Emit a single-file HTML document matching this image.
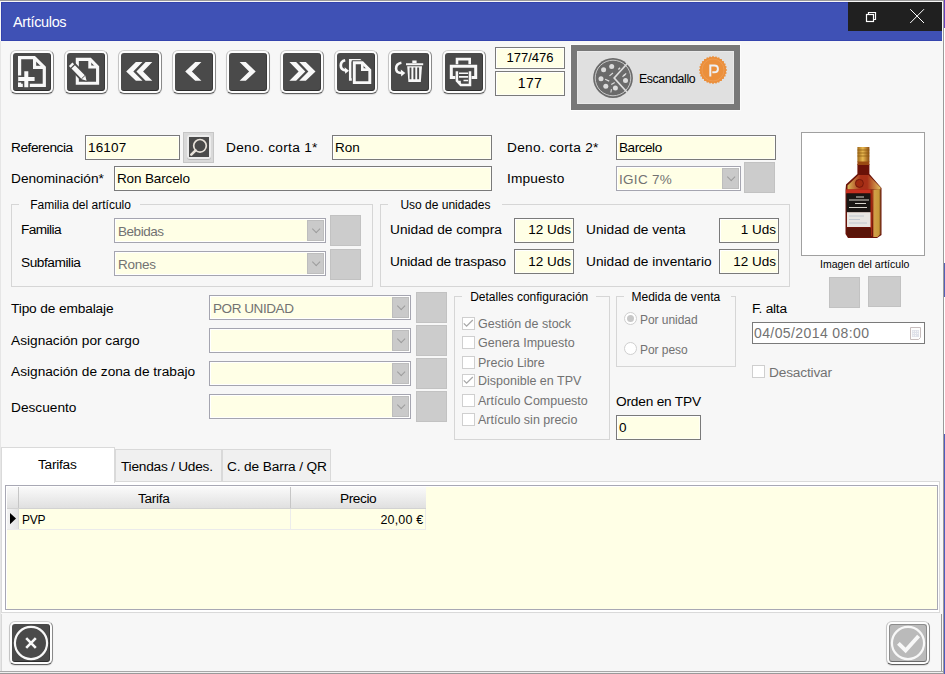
<!DOCTYPE html>
<html><head><meta charset="utf-8">
<style>
*{box-sizing:border-box;margin:0;padding:0}
html,body{width:945px;height:674px;overflow:hidden;background:#f7f7f7;font-family:"Liberation Sans",sans-serif}
.a{position:absolute}
.t{position:absolute;white-space:nowrap;line-height:13px;font-size:13.7px;color:#000;letter-spacing:0}
.g{color:#727272}
.inp{position:absolute;background:#ffffe6;border:1px solid #7a7a7a;box-shadow:inset 1px 1px 0 #fff,inset -1px -1px 0 #fffff4}
.cmb{position:absolute;background:#ffffe6;border:1px solid #a5a5b0;box-shadow:inset 0 0 0 1px #fff}
.dd{position:absolute;background:#cacaca;border:1px solid #bdbdbd}
.dd:after{content:"";position:absolute;left:4.6px;top:5px;width:5.4px;height:5.4px;border-right:1px solid #9c9c9c;border-bottom:1px solid #9c9c9c;transform:rotate(45deg)}
.sq{position:absolute;background:#cccccc;border:1px solid #c2c2c2}
.grp{position:absolute;border:1px solid #d6d6d6}
.gt{position:absolute;white-space:nowrap;font-size:12px;line-height:12px;background:#f7f7f7;padding:0 4px;color:#000}
.cb{position:absolute;width:13px;height:13px;border:1px solid #cfcfcf;background:#fff}
.btn{position:absolute;width:44px;height:44px;border-radius:6px;background:#fdfdfd;border:1px solid;border-color:#d0d0d0 #8a8a8a #606060 #c4c4c4;box-shadow:0 1px 1px rgba(0,0,0,.12)}
.btn .in{position:absolute;left:2px;top:2px;width:38px;height:38px;background:#4a4a4a;border-radius:3px;border-bottom:1px solid #2c2c2c;border-right:1px solid #3a3a3a}
.btn svg{position:absolute;left:-1px;top:-1px}
</style></head><body>
<!-- window frame -->
<div class="a" style="left:0;top:0;width:945px;height:1px;background:#9a9a9a"></div>
<div class="a" style="left:1px;top:2px;width:941px;height:39px;background:#3f51b5;border-top:1px solid #3343ad;border-left:1px solid #3343ad;border-bottom:1px solid #3545ae"></div>
<div class="t" style="left:13px;top:15.2px;font-size:14.5px;line-height:14.5px;color:#fff;letter-spacing:-.35px">Artículos</div>
<div class="a" style="left:848px;top:2px;width:94px;height:29px;background:#202020"></div>
<!-- restore icon -->
<svg class="a" style="left:863px;top:9px" width="16" height="16" viewBox="0 0 16 16"><rect x="3.5" y="5.5" width="7" height="7" fill="none" stroke="#fff" stroke-width="1.2"/><path d="M5.5 5.5V3.5H12.5V10.5H10.5" fill="none" stroke="#fff" stroke-width="1.2"/></svg>
<svg class="a" style="left:909px;top:8px" width="16" height="16" viewBox="0 0 16 16"><path d="M1.2 1.2L15 15M15 1.2L1.2 15" stroke="#fff" stroke-width="1"/></svg>
<div class="a" style="left:943px;top:0;width:1px;height:674px;background:#9a9a9a"></div>
<div class="a" style="left:944px;top:0;width:1px;height:28px;background:#6a3fc0"></div>
<div class="a" style="left:944px;top:28px;width:1px;height:646px;background:#fff"></div>
<div class="a" style="left:944px;top:263px;width:1px;height:34px;background:#5560b8"></div>
<div class="a" style="left:944px;top:434px;width:1px;height:240px;background:#4f5cbf"></div>
<div class="a" style="left:0;top:41px;width:1px;height:633px;background:#e6e6e6"></div>
<div class="a" style="left:0;top:671px;width:943px;height:1px;background:#a8a8a8"></div>
<div class="a" style="left:941px;top:614px;width:1px;height:57px;background:#999"></div>
<div class="a" style="left:1px;top:614px;width:1px;height:57px;background:#d8d8d8"></div>
<div class="a" style="left:0;top:673px;width:943px;height:1px;background:#999"></div>
<div class="a" style="left:0;top:672px;width:943px;height:1px;background:#f0f0f0"></div>

<!-- TOOLBAR placeholder -->
<!-- TB START -->
<div class="btn" style="left:10px;top:50px"><div class="in" style="background:#4a4a4a"></div><svg width="44" height="44" viewBox="0 0 44 44"><path d="M9.6 7.6H24.3L34.3 17.4V35.4H9.6Z" fill="none" stroke="#f8f8f8" stroke-width="3.2"/>
<path d="M24.6 7.6V17.3H34.3" fill="none" stroke="#f8f8f8" stroke-width="3.2"/>
<path d="M16.3 21.3V37.2M8.2 29H24.6" stroke="#4a4a4a" stroke-width="7"/>
<path d="M16.3 21.3V37.2M8.2 29H24.6" stroke="#f8f8f8" stroke-width="4"/></svg></div>
<div class="btn" style="left:64px;top:50px"><div class="in" style="background:#4a4a4a"></div><svg width="44" height="44" viewBox="0 0 44 44"><path d="M13.3 9.4H26.2L33.6 16.8V33.3H13.3Z" fill="none" stroke="#f8f8f8" stroke-width="3.1"/>
<path d="M25.8 9.4V17H33.6" fill="none" stroke="#f8f8f8" stroke-width="3"/>
<g transform="translate(14.5 22.3) rotate(45.9)"><path d="M-12 -4.2H7.8L12.8 0L7.8 4.2H-12Z" fill="#4a4a4a"/>
<path d="M-11.2 -2.4H-8.8V2.4H-11.2Z M-7.6 -2.4H7.3L11.6 0L7.3 2.4H-7.6Z" fill="#f8f8f8"/><path d="M6.8 -2.6V2.6" stroke="#4a4a4a" stroke-width="0.9"/></g></svg></div>
<div class="btn" style="left:118px;top:50px"><div class="in" style="background:#4a4a4a"></div><svg width="44" height="44" viewBox="0 0 44 44"><path d="M27.6 12.1H34.3L25.1 21.4L34.3 30.7H27.6L18.4 21.4Z" fill="#f8f8f8"/><path d="M17.9 12.1H24.5L15.3 21.4L24.5 30.7H17.9L8.2 21.4Z" fill="#f8f8f8"/></svg></div>
<div class="btn" style="left:172px;top:50px"><div class="in" style="background:#4a4a4a"></div><svg width="44" height="44" viewBox="0 0 44 44"><path d="M23.2 12.1H29.4L19.9 21.4L29.4 30.7H23.2L13.2 21.4Z" fill="#f8f8f8"/></svg></div>
<div class="btn" style="left:226px;top:50px"><div class="in" style="background:#4a4a4a"></div><svg width="44" height="44" viewBox="0 0 44 44"><path d="M13.6 12.1H19.8L29.7 21.4L19.8 30.7H13.6L23.1 21.4Z" fill="#f8f8f8"/></svg></div>
<div class="btn" style="left:280px;top:50px"><div class="in" style="background:#4a4a4a"></div><svg width="44" height="44" viewBox="0 0 44 44"><path d="M9.4 12.1H16.1L25.3 21.4L16.1 30.7H9.4L18.6 21.4Z" fill="#f8f8f8"/><path d="M19.2 12.1H25.8L35.5 21.4L25.8 30.7H19.2L28.4 21.4Z" fill="#f8f8f8"/></svg></div>
<div class="btn" style="left:334px;top:50px"><div class="in" style="background:#4a4a4a"></div><svg width="44" height="44" viewBox="0 0 44 44"><path d="M16.2 10.3H25.8L29 13.5V29.5H16.2Z" fill="none" stroke="#f8f8f8" stroke-width="2.5"/>
<path d="M20.3 12.8H28.4L35.8 20.2V32.6H20.3Z" fill="#4a4a4a" stroke="#4a4a4a" stroke-width="5"/>
<path d="M20.3 12.8H28.4L35.8 20.2V32.6H20.3Z" fill="none" stroke="#f8f8f8" stroke-width="2.9"/>
<path d="M28.3 12.8V19.6H35.8" fill="none" stroke="#f8f8f8" stroke-width="2.6"/>
<path d="M11.2 10.3C8.3 10.9 6.8 13.1 6.8 15.5C6.8 18.2 8.8 20.1 11.6 20.5" fill="none" stroke="#f8f8f8" stroke-width="2.7"/>
<path d="M10.6 17.2L15 20.7L11.2 23.8Z" fill="#f8f8f8"/></svg></div>
<div class="btn" style="left:388px;top:50px"><div class="in" style="background:#4a4a4a"></div><svg width="44" height="44" viewBox="0 0 44 44"><path d="M13.4 12.7C10.2 13.3 8.1 15.6 8.1 18.4C8.1 21 10 22.8 13.2 23.1" fill="none" stroke="#f8f8f8" stroke-width="2.5"/>
<path d="M12.8 19.6L17.3 23L13.2 26.4Z" fill="#f8f8f8"/>
<path d="M18 13.2H35.2V15.3H18Z M24.3 10.6H28.6V13H24.3Z" fill="#f8f8f8"/>
<path d="M19.2 16.3H34L32.8 32H20.4Z" fill="#f8f8f8"/>
<path d="M21.6 17.6H23.4V29.2H21.6Z M25.4 17.6H27.3V29.2H25.4Z M29.2 17.6H31.1V29.2H29.2Z" fill="#4a4a4a"/></svg></div>
<div class="btn" style="left:442px;top:50px"><div class="in" style="background:#4a4a4a"></div><svg width="44" height="44" viewBox="0 0 44 44"><path d="M15 14.2V9.1H27.7V14.2" fill="none" stroke="#f8f8f8" stroke-width="2.6"/>
<path d="M9.3 16.2H33.7V27.6H9.3Z" fill="none" stroke="#f8f8f8" stroke-width="3"/>
<path d="M14.8 21.2H28V35.2H18.6L14.8 31Z" fill="#4a4a4a" stroke="#4a4a4a" stroke-width="3"/>
<path d="M14.9 21.3V30.8L18.8 34.9H28V21.3" fill="none" stroke="#f8f8f8" stroke-width="2.5"/>
<path d="M14.9 30.8H18.8V34.9Z" fill="#f8f8f8"/>
<path d="M17 22.5H26.1V23.9H17Z M17 26.1H26.1V27.7H17Z M21.5 29.7H26.1V31.3H21.5Z" fill="#f8f8f8"/></svg></div>
<!-- TB END -->

<!-- counters -->
<div class="inp" style="left:495px;top:47px;width:70px;height:22px;text-align:center"><div class="t" style="position:static;line-height:19px;font-size:13px;letter-spacing:0">177/476</div></div>
<div class="inp" style="left:495px;top:71px;width:70px;height:25px;text-align:center"><div class="t" style="position:static;line-height:22px;font-size:14px;letter-spacing:.3px">177</div></div>
<!-- escandallo -->
<div class="a" style="left:571px;top:45px;width:169px;height:65px;background:#e0e0e0;border:6px solid #787878;box-shadow:inset 0 0 0 1px #e9e9e9,0 0 0 1px #fcfcfc"></div>
<svg class="a" style="left:590px;top:55px" width="46" height="46" viewBox="0 0 46 46">
<circle cx="23" cy="23" r="19.9" fill="#6a6a6a"/>
<circle cx="23" cy="23" r="17.8" fill="none" stroke="#d2d2d2" stroke-width="0.9"/>
<path d="M37.5 8.3L24.2 23L37.5 37.7" fill="none" stroke="#dedede" stroke-width="1.7"/>
<g fill="#dcdcdc"><circle cx="21.7" cy="11.5" r="2.5"/><circle cx="13.6" cy="14.8" r="2.5"/><circle cx="11" cy="23.8" r="2.5"/><circle cx="15.8" cy="31.2" r="2.5"/><circle cx="25.4" cy="33" r="2.5"/><circle cx="35.5" cy="25.6" r="2.5"/>
<rect x="19" y="19" width="4.5" height="1.2" transform="rotate(-40 21 19.6)"/><rect x="15" y="24.5" width="4.5" height="1.2" transform="rotate(25 17 25)"/><rect x="21" y="28" width="4" height="1.2" transform="rotate(-30 23 28.6)"/><rect x="20.6" y="34" width="1.1" height="3.5" transform="rotate(10 21 35.7)"/><rect x="32" y="20" width="3.2" height="1.2" transform="rotate(-50 33.6 20.6)"/><rect x="33.5" y="19" width="3.2" height="1.2" transform="rotate(-50 35 19.6)"/><rect x="28" y="13" width="2.5" height="1.4" transform="rotate(-45 29.2 13.7)"/></g>
</svg>
<div class="t" style="left:639px;top:74px;font-size:12.3px;line-height:11.5px;letter-spacing:-.4px">Escandallo</div>
<svg class="a" style="left:697.5px;top:55.4px" width="30" height="30" viewBox="0 0 30 30">
<polygon points="29.20,15.00 27.82,16.44 28.84,18.16 27.18,19.26 27.79,21.16 25.92,21.86 26.10,23.85 24.12,24.12 23.85,26.10 21.86,25.92 21.16,27.79 19.26,27.18 18.16,28.84 16.44,27.82 15.00,29.20 13.56,27.82 11.84,28.84 10.74,27.18 8.84,27.79 8.14,25.92 6.15,26.10 5.88,24.12 3.90,23.85 4.08,21.86 2.21,21.16 2.82,19.26 1.16,18.16 2.18,16.44 0.80,15.00 2.18,13.56 1.16,11.84 2.82,10.74 2.21,8.84 4.08,8.14 3.90,6.15 5.88,5.88 6.15,3.90 8.14,4.08 8.84,2.21 10.74,2.82 11.84,1.16 13.56,2.18 15.00,0.80 16.44,2.18 18.16,1.16 19.26,2.82 21.16,2.21 21.86,4.08 23.85,3.90 24.12,5.88 26.10,6.15 25.92,8.14 27.79,8.84 27.18,10.74 28.84,11.84 27.82,13.56" fill="#eb8f3b"/>
<circle cx="15" cy="15" r="11" fill="none" stroke="#ef9d55" stroke-width="0.8"/>
<path d="M12.3 21.5V10.6H16.3C18.6 10.6 19.9 11.8 19.9 13.9C19.9 16 18.6 17.3 16.3 17.3H14.3" fill="none" stroke="#eef0f4" stroke-width="2"/>
</svg>

<!-- row 1 -->
<div class="t" style="left:11px;top:141px;letter-spacing:-.45px">Referencia</div>
<div class="inp" style="left:85px;top:135px;width:95px;height:25px"></div>
<div class="t" style="left:88px;top:141px;letter-spacing:.15px;font-size:13.5px">16107</div>
<div class="a" style="left:183px;top:132px;width:31px;height:31px;background:#d9d9d9;border:1px solid #c6c6c6"></div>
<div class="a" style="left:187px;top:135px;width:24px;height:24px;background:#ececec;border-radius:3px;box-shadow:0 1px 0 #b8b8b8"></div>
<div class="a" style="left:189px;top:137px;width:20px;height:20px;background:#4a4a4a"></div>
<svg class="a" style="left:189px;top:137px" width="20" height="20" viewBox="0 0 20 20"><circle cx="11" cy="8.8" r="6.3" fill="none" stroke="#e8e2da" stroke-width="1.7"/><path d="M6.6 13.3L2.3 17.6" stroke="#e8e2da" stroke-width="2.6" stroke-linecap="round"/></svg>
<div class="t" style="left:226px;top:141px;letter-spacing:.3px">Deno. corta 1*</div>
<div class="inp" style="left:332px;top:135px;width:160px;height:25px"></div>
<div class="t" style="left:335px;top:141px;letter-spacing:0;font-size:13.5px">Ron</div>
<div class="t" style="left:507px;top:141px;letter-spacing:.3px">Deno. corta 2*</div>
<div class="inp" style="left:616px;top:135px;width:160px;height:25px"></div>
<div class="t" style="left:619px;top:141px;letter-spacing:-.43px;font-size:13.5px">Barcelo</div>
<!-- row 2 -->
<div class="t" style="left:11px;top:172px;letter-spacing:0">Denominación*</div>
<div class="inp" style="left:114px;top:166px;width:378px;height:25px"></div>
<div class="t" style="left:117px;top:172px;letter-spacing:-.14px;font-size:13.5px">Ron Barcelo</div>
<div class="t" style="left:507px;top:172px;letter-spacing:.15px">Impuesto</div>
<div class="cmb" style="left:616px;top:166px;width:125px;height:25px"></div>
<div class="dd" style="left:722px;top:168px;width:17px;height:21px"></div>
<div class="t g" style="left:619px;top:173px;font-size:13.5px;letter-spacing:.3px">IGIC 7%</div>
<div class="sq" style="left:744px;top:162px;width:31px;height:31px"></div>

<!-- image -->
<div class="a" style="left:801px;top:132px;width:124px;height:124px;background:#fff;border:1px solid #a0a0a0"></div>
<svg class="a" style="left:840px;top:144px" width="48" height="98" viewBox="0 0 48 98">
<defs><linearGradient id="gc" x1="0" x2="1"><stop offset="0" stop-color="#a06a1a"/><stop offset=".45" stop-color="#e8b850"/><stop offset="1" stop-color="#8a4a10"/></linearGradient>
<linearGradient id="gs" x1="0" x2="1"><stop offset="0" stop-color="#a02810"/><stop offset=".3" stop-color="#d0a048"/><stop offset=".8" stop-color="#c89838"/><stop offset="1" stop-color="#8a5a20"/></linearGradient>
<linearGradient id="gsh" x1="0" x2="1"><stop offset="0" stop-color="#d8b858"/><stop offset=".4" stop-color="#a83018"/><stop offset=".6" stop-color="#a83018"/><stop offset="1" stop-color="#e0c060"/></linearGradient></defs>
<path d="M17.4 20V30L6 40.5L5.5 46V90L8 94H37L41.5 91V44L29.4 30V20Z" fill="#6a1208"/>
<path d="M18.5 31L7.5 41.5V45.5H40.5V43.5L28.5 31Z" fill="url(#gsh)"/>
<circle cx="19.4" cy="39.4" r="4" fill="#a02a10" stroke="#6a1208" stroke-width=".8"/>
<path d="M32 46L40.5 45V90L37.5 93H33Z" fill="url(#gs)"/>
<path d="M31 46V92" stroke="#b02a12" stroke-width="1.6"/>
<rect x="17.4" y="3" width="12" height="15" fill="url(#gc)"/>
<rect x="17.4" y="17.5" width="12" height="3.5" fill="#9a4a12"/>
<path d="M17.4 6H29.4M17.4 9H29.4M17.4 12H29.4" stroke="#8a5a10" stroke-width=".7"/>
<rect x="6" y="45.4" width="24.5" height="4" fill="#c83020"/>
<rect x="6.5" y="49.4" width="24" height="19" fill="#1a1614"/>
<path d="M16 53H24M9 56H29M15 59.5H26M9 63.5H27" stroke="#d8d4cc" stroke-width="1.1"/>
<rect x="7" y="68.2" width="23.5" height="14.8" fill="#e8e6e2"/>
<path d="M9 72H24M9 75.5H20M9 79H27" stroke="#b8c0cc" stroke-width=".8"/>
<path d="M6 84H31V93H8Z" fill="#5a1408"/>
</svg>
<div class="t" style="left:820px;top:259px;font-size:10.5px;line-height:10.5px;letter-spacing:0">Imagen del artículo</div>
<div class="sq" style="left:829px;top:277px;width:31px;height:31px"></div>
<div class="sq" style="left:868px;top:276px;width:33px;height:31px"></div>

<!-- group familia -->
<div class="grp" style="left:11px;top:204px;width:362px;height:83px"></div>
<div class="gt" style="left:19px;top:199px;width:121px;padding-left:11.2px">Familia del artículo</div>
<div class="t" style="left:21px;top:223px;letter-spacing:-.6px">Familia</div>
<div class="t" style="left:21px;top:256px;letter-spacing:-.45px">Subfamilia</div>
<div class="cmb" style="left:114px;top:218px;width:212px;height:25px"></div>
<div class="dd" style="left:307px;top:220px;width:17px;height:21px"></div>
<div class="t g" style="left:118px;top:225px;letter-spacing:-.45px;font-size:13.5px">Bebidas</div>
<div class="cmb" style="left:114px;top:251px;width:212px;height:25px"></div>
<div class="dd" style="left:307px;top:253px;width:17px;height:21px"></div>
<div class="t g" style="left:118px;top:258px;letter-spacing:-.28px;font-size:13.5px">Rones</div>
<div class="sq" style="left:330px;top:215px;width:31px;height:31px"></div>
<div class="sq" style="left:330px;top:249px;width:31px;height:31px"></div>

<!-- group unidades -->
<div class="grp" style="left:380px;top:204px;width:410px;height:83px"></div>
<div class="gt" style="left:388px;top:199px;width:114px;padding-left:12.4px">Uso de unidades</div>
<div class="t" style="left:390px;top:223px;letter-spacing:0">Unidad de compra</div>
<div class="t" style="left:390px;top:255px;letter-spacing:-.15px">Unidad de traspaso</div>
<div class="inp" style="left:514px;top:218px;width:60px;height:25px"></div>
<div class="t" style="left:514px;top:223px;width:57px;text-align:right;font-size:13.5px;letter-spacing:0">12 Uds</div>
<div class="inp" style="left:514px;top:249px;width:60px;height:25px"></div>
<div class="t" style="left:514px;top:255px;width:57px;text-align:right;font-size:13.5px;letter-spacing:0">12 Uds</div>
<div class="t" style="left:586px;top:223px;letter-spacing:0">Unidad de venta</div>
<div class="t" style="left:586px;top:255px;letter-spacing:0">Unidad de inventario</div>
<div class="inp" style="left:719px;top:218px;width:60px;height:25px"></div>
<div class="t" style="left:719px;top:223px;width:57px;text-align:right;font-size:13.5px;letter-spacing:0">1 Uds</div>
<div class="inp" style="left:719px;top:249px;width:60px;height:25px"></div>
<div class="t" style="left:719px;top:255px;width:57px;text-align:right;font-size:13.5px;letter-spacing:0">12 Uds</div>

<!-- lower left -->
<div class="t" style="left:11px;top:302px;letter-spacing:-.13px">Tipo de embalaje</div>
<div class="t" style="left:11px;top:334px;letter-spacing:0">Asignación por cargo</div>
<div class="t" style="left:11px;top:365px;letter-spacing:0">Asignación de zona de trabajo</div>
<div class="t" style="left:11px;top:401px;letter-spacing:0">Descuento</div>
<div class="cmb" style="left:209px;top:295px;width:202px;height:25px"></div>
<div class="dd" style="left:392px;top:297px;width:17px;height:21px"></div>
<div class="t g" style="left:213px;top:302px;letter-spacing:-.43px;font-size:13.5px">POR UNIDAD</div>
<div class="cmb" style="left:209px;top:328px;width:202px;height:25px"></div>
<div class="dd" style="left:392px;top:330px;width:17px;height:21px"></div>
<div class="cmb" style="left:209px;top:361px;width:202px;height:25px"></div>
<div class="dd" style="left:392px;top:363px;width:17px;height:21px"></div>
<div class="cmb" style="left:209px;top:394px;width:202px;height:25px"></div>
<div class="dd" style="left:392px;top:396px;width:17px;height:21px"></div>
<div class="sq" style="left:416px;top:292px;width:31px;height:31px"></div>
<div class="sq" style="left:416px;top:325px;width:31px;height:31px"></div>
<div class="sq" style="left:416px;top:358px;width:31px;height:31px"></div>
<div class="sq" style="left:416px;top:391px;width:31px;height:31px"></div>

<!-- detalles -->
<div class="grp" style="left:454px;top:296px;width:156px;height:144px"></div>
<div class="gt" style="left:462px;top:291px;width:134px;padding-left:8.2px">Detalles configuración</div>
<div class="cb" style="left:462px;top:317px"></div><svg class="a" style="left:462px;top:317px" width="13" height="13" viewBox="0 0 13 13"><path d="M1.8 6.4L4.6 9.2L10.8 3" fill="none" stroke="#a8a8a8" stroke-width="1.3"/></svg>
<div class="cb" style="left:462px;top:336px"></div>
<div class="cb" style="left:462px;top:356px"></div>
<div class="cb" style="left:462px;top:374px"></div><svg class="a" style="left:462px;top:374px" width="13" height="13" viewBox="0 0 13 13"><path d="M1.8 6.4L4.6 9.2L10.8 3" fill="none" stroke="#a8a8a8" stroke-width="1.3"/></svg>
<div class="cb" style="left:462px;top:394px"></div>
<div class="cb" style="left:462px;top:413px"></div>
<div class="t g" style="left:478px;top:318px;font-size:12.5px;letter-spacing:0">Gestión de stock</div>
<div class="t g" style="left:478px;top:337px;font-size:12.5px;letter-spacing:0">Genera Impuesto</div>
<div class="t g" style="left:478px;top:357px;font-size:12.5px;letter-spacing:0">Precio Libre</div>
<div class="t g" style="left:478px;top:375px;font-size:12.5px;letter-spacing:0">Disponible en TPV</div>
<div class="t g" style="left:478px;top:395px;font-size:12.5px;letter-spacing:0">Artículo Compuesto</div>
<div class="t g" style="left:478px;top:414px;font-size:12.5px;letter-spacing:0">Artículo sin precio</div>

<!-- medida -->
<div class="grp" style="left:616px;top:296px;width:120px;height:71px"></div>
<div class="gt" style="left:624px;top:291px;width:107px;padding-left:7.5px">Medida de venta</div>
<div class="a" style="left:624px;top:312px;width:13px;height:13px;border-radius:50%;border:1px solid #cfcfcf;background:#fff"></div>
<div class="a" style="left:627px;top:315px;width:7px;height:7px;border-radius:50%;background:#c8c8c8"></div>
<div class="a" style="left:624px;top:342px;width:13px;height:13px;border-radius:50%;border:1px solid #cfcfcf;background:#fff"></div>
<div class="t g" style="left:640px;top:314px;font-size:12px;letter-spacing:-.05px">Por unidad</div>
<div class="t g" style="left:640px;top:344px;font-size:12px;letter-spacing:-.05px">Por peso</div>

<div class="t" style="left:616px;top:395px;letter-spacing:-.2px">Orden en TPV</div>
<div class="inp" style="left:616px;top:415px;width:85px;height:25px"></div>
<div class="t" style="left:619px;top:421px;letter-spacing:0;font-size:13.5px">0</div>

<div class="t" style="left:752px;top:302px;letter-spacing:-.25px">F. alta</div>
<div class="a" style="left:752px;top:322px;width:173px;height:22px;background:#fff;border:1px solid #7a7a7a"></div>
<div class="t g" style="left:754px;top:327px;font-size:14px;letter-spacing:.4px">04/05/2014 08:00</div>
<svg class="a" style="left:910px;top:327px" width="12" height="13" viewBox="0 0 12 13"><path d="M0.5 0.5H10.5V10.5L8.5 12.5H0.5Z" fill="#fdfdfd" stroke="#c8bebe"/><rect x="2" y="3" width="7" height="7" fill="#e0e2ea"/><g fill="#fafafa"><rect x="2.8" y="3.8" width="1" height="1"/><rect x="5" y="3.8" width="1" height="1"/><rect x="7.2" y="3.8" width="1" height="1"/><rect x="2.8" y="6" width="1" height="1"/><rect x="5" y="6" width="1" height="1"/><rect x="7.2" y="6" width="1" height="1"/><rect x="2.8" y="8.2" width="1" height="1"/><rect x="5" y="8.2" width="1" height="1"/></g></svg>
<div class="cb" style="left:752px;top:365px"></div>
<div class="t g" style="left:769px;top:366px;letter-spacing:-.17px">Desactivar</div>

<!-- tabs -->
<div class="a" style="left:1px;top:481px;width:939px;height:132px;background:#fff;border:1px solid #dadada"></div>
<div class="a" style="left:115px;top:449px;width:107px;height:33px;background:#f0f0f0;border:1px solid #d9d9d9"></div>
<div class="a" style="left:222px;top:449px;width:109px;height:33px;background:#f0f0f0;border:1px solid #d9d9d9"></div>
<div class="a" style="left:1px;top:447px;width:114px;height:36px;background:#fff;border:1px solid #dadada;border-bottom:none"></div>
<div class="t" style="left:38px;top:458px;letter-spacing:-.25px">Tarifas</div>
<div class="t" style="left:121px;top:460px;letter-spacing:-.24px">Tiendas / Udes.</div>
<div class="t" style="left:227px;top:460px;letter-spacing:-.13px">C. de Barra / QR</div>

<!-- grid -->
<div class="a" style="left:5px;top:485px;width:933px;height:125px;background:#ffffe6;border:1px solid #a8a8b4;box-shadow:inset 1px 1px 0 #fff"></div>
<div class="a" style="left:7px;top:487px;width:419px;height:22px;background:linear-gradient(#fafafa,#e0e0e0);border-bottom:1px solid #d2d2d2"></div>
<div class="a" style="left:18px;top:487px;width:1px;height:21px;background:#c6c6c6"></div>
<div class="a" style="left:290px;top:487px;width:1px;height:21px;background:#c6c6c6"></div>
<div class="a" style="left:7px;top:509px;width:12px;height:21px;background:linear-gradient(90deg,#f3f3f3,#e4e4e4);border-right:1px solid #d8d8d8"></div>
<div class="a" style="left:7px;top:529px;width:419px;height:1px;background:#ebebeb"></div>
<div class="a" style="left:290px;top:509px;width:1px;height:20px;background:#ececec"></div>
<div class="a" style="left:425px;top:509px;width:1px;height:20px;background:#ececec"></div>
<svg class="a" style="left:9px;top:513px" width="10" height="12"><path d="M1 0L7 5.6L1 11.2Z" fill="#000"/></svg>
<div class="t" style="left:138px;top:492px;letter-spacing:-.3px">Tarifa</div>
<div class="t" style="left:340px;top:492px;letter-spacing:-.43px">Precio</div>
<div class="t" style="left:22px;top:514px;font-size:12px;letter-spacing:-.3px">PVP</div>
<div class="t" style="left:290px;top:514px;width:133.5px;text-align:right;font-size:12.5px;letter-spacing:.2px">20,00 €</div>

<!-- bottom buttons placeholder -->
<div class="btn" style="left:9px;top:621px"><div class="in"></div><svg width="44" height="44" viewBox="0 0 44 44"><circle cx="22" cy="22" r="16.1" fill="none" stroke="#f8f8f8" stroke-width="2.2"/><path d="M17.2 17.2L26.8 26.8M26.8 17.2L17.2 26.8" stroke="#f8f8f8" stroke-width="2.6"/></svg></div>
<div class="btn" style="left:886px;top:621px"><div class="in" style="background:#bababa;border:1px solid #8c8c8c;border-bottom-color:#6a6a6a"></div><svg width="44" height="44" viewBox="0 0 44 44"><circle cx="22" cy="22" r="16.1" fill="none" stroke="#f8f8f8" stroke-width="2.2"/><path d="M12.4 22.3L19.6 29.5L32.6 15" fill="none" stroke="#f8f8f8" stroke-width="3.9"/></svg></div>
</body></html>
